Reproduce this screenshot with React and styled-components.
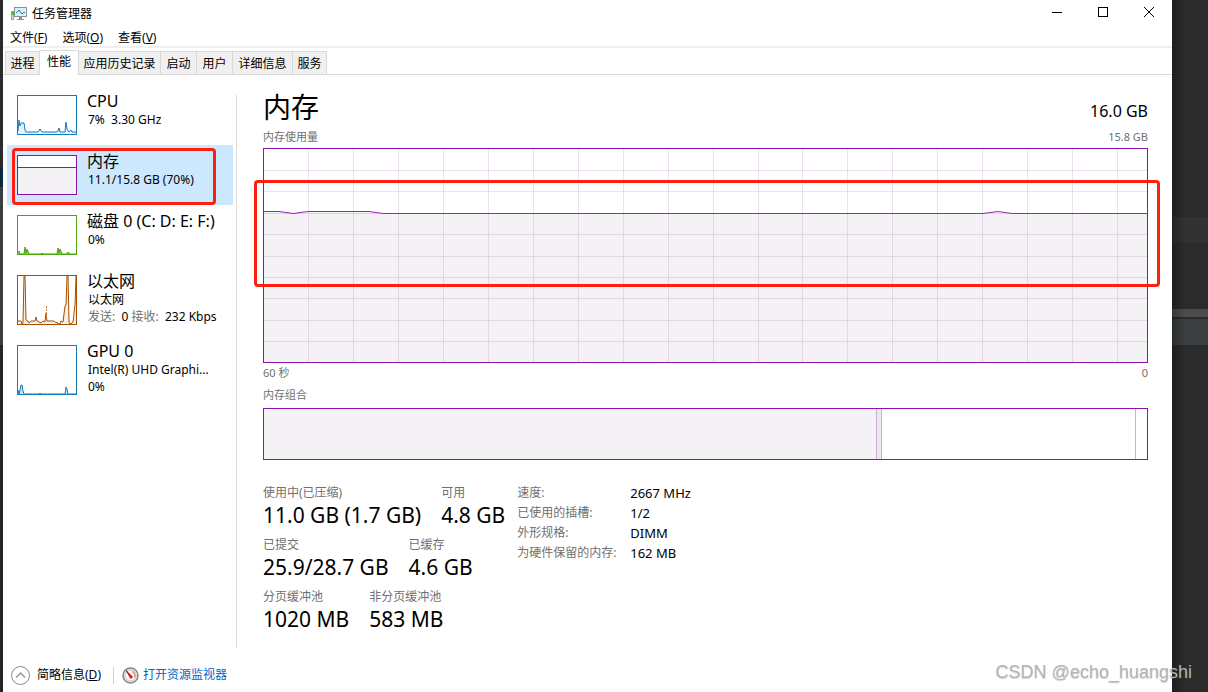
import React from "react";
import styled, { createGlobalStyle } from "styled-components";

const GlobalStyle = createGlobalStyle`
  * { box-sizing: border-box; }
  body {
    margin: 0;
    background: #2b2b2b;
    color: #000;
    font: 12px/18px "Noto Sans", "Noto Sans CJK SC", sans-serif;
  }
  button { font: inherit; color: inherit; background: none; border: 0; padding: 0; }
  h1, h2, dl, dd, dt, p { margin: 0; font-weight: 400; }
`;

const purple = "#8b12ae";

const Desktop = styled.div`
  position: relative;
  display: grid;
  grid-template-columns: 3px minmax(0, 1fr) 36px;
  min-height: 100vh;
`;

const LeftEdge = styled.div`
  background: linear-gradient(#2b2b2b 167px, #0d293e 167px 187px, #3c3f41 187px 345px, #242424 345px);
`;

const RightEdge = styled.div`
  background:
    linear-gradient(90deg, rgba(0, 0, 0, 0.3), transparent 14px),
    linear-gradient(
      #2b2b2b 217px, #323232 217px 242px, #2b2b2b 242px 309px, #4d4d4d 309px 317px,
      #2b2b2b 317px 319px, #3c3f41 319px 345px, #2b2b2b 345px
    );
`;

const Window = styled.div`
  display: flex;
  flex-direction: column;
  background: #fff;
`;

const TitleBar = styled.header`
  display: flex;
  align-items: center;
  height: 27px;
  padding-left: 8px;
  gap: 5px;
`;

const Title = styled.h1`
  flex: 1;
  font-size: 12px;
  line-height: 18px;
`;

const WindowControls = styled.div`
  display: flex;
  align-self: flex-start;
`;

const ControlButton = styled.button`
  display: grid;
  place-items: center;
  width: 46px;
  height: 24px;
`;

const MenuBar = styled.nav`
  display: flex;
  gap: 15px;
  height: 21px;
  padding: 2px 0 0 7px;
  align-items: center;
  border-bottom: 2px solid #f0f0f0;
`;

const Tabs = styled.div`
  display: flex;
  align-items: flex-end;
  height: 27px;
  padding-left: 2px;
  border-bottom: 1px solid #d9d9d9;
`;

const Tab = styled.button`
  width: ${(p) => p.$width}px;
  height: ${(p) => (p.$active ? 25 : 23)}px;
  padding-top: ${(p) => (p.$active ? 0 : 2)}px;
  padding-bottom: ${(p) => (p.$active ? 3 : 0)}px;
  margin-bottom: ${(p) => (p.$active ? -1 : 0)}px;
  background: ${(p) => (p.$active ? "#fff" : "#f0f0f0")};
  border: 1px solid #d9d9d9;
  border-left-width: ${(p) => (p.$active || p.$first ? 1 : 0)}px;
  border-right-width: ${(p) => (p.$beforeActive ? 0 : 1)}px;
  border-bottom: 0;
  white-space: nowrap;
`;

const Body = styled.div`
  display: flex;
  flex: 1;
  padding: 10px 24px 0 4px;
`;

const Sidebar = styled.aside`
  flex: none;
  width: 230px;
  margin: 10px 0;
  padding-right: 3px;
  border-right: 1px solid #dcdcdc;
`;

const DeviceList = styled.div`
  display: flex;
  flex-direction: column;
  margin-top: -10px;
`;

const Device = styled.button`
  position: relative;
  display: flex;
  gap: 10px;
  height: ${(p) => (p.$tall ? 70 : 60)}px;
  padding: 10px 0 0 10px;
  text-align: left;
  background: ${(p) => (p.$selected ? "#cce8ff" : "transparent")};
`;

const Spark = styled.svg`
  flex: none;
  display: block;
  background: #fff;
`;

const DeviceText = styled.span`
  display: flex;
  flex-direction: column;
  min-width: 0;
  margin-top: -4px;
  white-space: pre;
`;

const DeviceName = styled.span`
  font-size: 16px;
  line-height: 20px;
`;

const DeviceLine = styled.span`
  padding-left: 1px;
  line-height: 17px;
`;

const Muted = styled.span`
  color: #707070;
`;

const Highlight = styled.span`
  position: absolute;
  inset: ${(p) => p.$inset};
  border: 3px solid #ff1e12;
  border-radius: 4px;
  pointer-events: none;
`;

const Main = styled.main`
  flex: 1;
  min-width: 0;
  padding: 4px 0 0 26px;
`;

const Heading = styled.div`
  display: flex;
  justify-content: space-between;
  align-items: flex-start;
  height: 38px;
`;

const PanelTitle = styled.h2`
  font-size: 28px;
  line-height: 36px;
`;

const Capacity = styled.span`
  font-size: 16px;
  line-height: 20px;
  padding-top: 12px;
`;

const CaptionRow = styled.div`
  display: flex;
  justify-content: space-between;
  height: ${(p) => p.$height}px;
  color: #707070;
  font-size: 11px;
  line-height: 20px;
`;

const ChartFrame = styled.div`
  position: relative;
  height: 215px;
  border: 1px solid ${purple};
`;

const ChartSvg = styled.svg`
  display: block;
  width: 100%;
  height: 100%;
`;

const Composition = styled.div`
  display: flex;
  height: 52px;
  border: 1px solid ${purple};
`;

const Segment = styled.div`
  flex: ${(p) => p.$share} 0 0;
  background: ${(p) => p.$fill};
  border-right: ${(p) => (p.$last ? "0" : "1px solid #c9b2d6")};
`;

const Details = styled.div`
  display: flex;
  gap: 12px;
  padding-top: 23px;
`;

const Stats = styled.dl`
  display: flex;
  flex-direction: column;
`;

const StatRow = styled.div`
  display: flex;
  gap: 20px;
  height: 52px;
`;

const StatLabel = styled.dt`
  color: #707070;
  line-height: 20px;
`;

const StatValue = styled.dd`
  font-size: 21px;
  line-height: 24px;
  white-space: nowrap;
`;

const Specs = styled.table`
  align-self: flex-start;
  border-collapse: collapse;
  line-height: 20px;
  th {
    width: 113px;
    padding: 0;
    color: #707070;
    font-weight: 400;
    text-align: left;
    white-space: nowrap;
  }
  td {
    padding: 0;
    font-size: 13px;
  }
`;

const Footer = styled.footer`
  display: flex;
  align-items: center;
  height: 34px;
  padding-left: 8px;
`;

const FewerDetails = styled.button`
  display: flex;
  align-items: center;
  gap: 7px;
  padding-right: 12px;
`;

const MonitorLink = styled.a`
  display: flex;
  align-items: center;
  gap: 4px;
  padding-left: 8px;
  border-left: 1px solid #d0d0d0;
  line-height: 16px;
  color: #0066cc;
  text-decoration: none;
`;

const Watermark = styled.div`
  position: absolute;
  right: 16px;
  bottom: 8px;
  color: #b4b4b4;
  font: 18px/24px "Liberation Sans", sans-serif;
  text-shadow: 0 1px 1px rgba(90, 90, 90, 0.25);
`;

function AppIcon() {
  return (
    <svg width="16" height="16" viewBox="0 0 16 16" aria-hidden="true">
      <rect x="0.5" y="5.5" width="2" height="8" fill="#d8dcdf" stroke="#9aa0a4" />
      <path d="M1 7.500h2" stroke="#2fc52f" strokeWidth="3" />
      <rect x="3.500" y="1.500" width="12" height="9" fill="#d9f1fb" stroke="#8b9297" />
      <path d="M5 6.500H6L8 4 11 8 12.500 6.500H14" fill="none" stroke="#2a7ba5" />
      <path d="M8 11h3v2h2v1H6v-1h2z" fill="#8b9297" />
    </svg>
  );
}

function GaugeIcon() {
  return (
    <svg width="17" height="17" viewBox="0 0 17 17" aria-hidden="true">
      <circle cx="8.500" cy="8.500" r="7.500" fill="#f4f4f4" stroke="#858585" strokeWidth="1.500" />
      <circle cx="8.500" cy="8.500" r="5.500" fill="#fff" stroke="#bcbcbc" />
      <path d="M10 4.500a4.500 4.500 0 0 1 2.500 6" fill="none" stroke="#e39b76" strokeWidth="1.500" />
      <path d="M4 3.500 10.500 10 9 11.500Z" fill="#d5141c" stroke="#b80f18" />
    </svg>
  );
}

const devices = [
  {
    name: "CPU", lines: ["7%  3.30 GHz"], color: "#117dbb", fill: "#e6f1f8", height: 40,
    path: "M1 36 2 25 3 31 4 28 7 28 8 35 9 37 21 37 23 34 25 37 39 37 41 36 42 33 43 37 48 37 49 27 50 34 52 37 54 35 55 37 59 37",
  },
  {
    name: "内存", lines: ["11.1/15.8 GB (70%)"], color: purple, fill: "#f4f2f4", height: 40,
    path: "M1 12.500H59", selected: true,
  },
  {
    name: "磁盘 0 (C: D: E: F:)", lines: ["0%"], color: "#4da60c", fill: "#8fc864", height: 40,
    path: "M1 37 2 36 3 39 7 39 8 32 9 38 10 34 12 39 24 39 25 38 26 39 40 39 41 33 42 38 43 34 45 39 50 39 51 37 53 39 59 39",
  },
  {
    name: "以太网", network: true, color: "#a74f01", fill: "#f7ede4", height: 50, tall: true,
    path: "M1 46 4 46 5 49 6 48 7 1 8 1 9 45 11 46 12 48 14 46 18 46 19 42 20 46 24 48 26 46 28 47 29 38 30 46 37 46 39 48 40 47 41 49 43 49 44 46 46 47 48 31 49 30 50 1 51 1 52 47 53 49 55 48 56 47 58 30 59 1",
  },
  {
    name: "GPU 0", lines: ["Intel(R) UHD Graphi...", "0%"], color: "#117dbb", fill: "#c7e0ef", height: 50, tall: true,
    path: "M1 45 2 49 3 45 4 40 5 40 6 46 7 49 22 49 23 48 24 49 48 49 49 42 50 44 51 49 59 49",
  },
];

function DeviceGraph({ color, fill, height, path, network }) {
  return (
    <Spark width="60" height={height} viewBox={`0 0 60 ${height}`} aria-hidden="true">
      <path d={`${path}V${height}H1Z`} fill={fill} />
      <path d={path} fill="none" stroke={color} />
      {network && <path d="M29.500 31V46" stroke="#e8762b" strokeDasharray="2 1" />}
      <rect x="0.5" y="0.5" width="59" height={height - 1} fill="none" stroke={color} />
    </Spark>
  );
}

function MemoryChart() {
  const columns = Array.from({ length: 19 }, (_, i) => 44.5 + i * 44.95);
  const rows = Array.from({ length: 9 }, (_, i) => 21.5 + i * 21.4);
  const trace = "M0 62.500H15L29 64.500 44 62.500H105L119 64.500H719L734 62.500 748 64.500H883";
  return (
    <ChartFrame>
      <ChartSvg viewBox="0 0 883 213" preserveAspectRatio="none" role="img" aria-label="内存使用量">
        <path d={`${trace}V213H0Z`} fill="#f4f2f5" />
        <g stroke="#7d2a96" strokeOpacity="0.14" shapeRendering="crispEdges">
          {columns.map((x) => <line key={x} x1={x} x2={x} y1="0" y2="213" vectorEffect="non-scaling-stroke" />)}
          {rows.map((y) => <line key={y} x1="0" x2="883" y1={y} y2={y} vectorEffect="non-scaling-stroke" />)}
        </g>
        <path d={trace} fill="none" stroke="#9528b4" vectorEffect="non-scaling-stroke" />
      </ChartSvg>
      <Highlight $inset="31px -13px 75px -10px" />
    </ChartFrame>
  );
}

const tabs = [
  ["进程", 34], ["性能", 40], ["应用历史记录", 82], ["启动", 36], ["用户", 36], ["详细信息", 60], ["服务", 34],
];

const stats = [
  [["使用中(已压缩)", "11.0 GB (1.7 GB)"], ["可用", "4.8 GB"]],
  [["已提交", "25.9/28.7 GB"], ["已缓存", "4.6 GB"]],
  [["分页缓冲池", "1020 MB"], ["非分页缓冲池", "583 MB"]],
];

const specs = [
  ["速度:", "2667 MHz"], ["已使用的插槽:", "1/2"], ["外形规格:", "DIMM"], ["为硬件保留的内存:", "162 MB"],
];

export default function App() {
  return (
    <Desktop>
      <GlobalStyle />
      <LeftEdge />
      <Window>
        <TitleBar>
          <AppIcon />
          <Title>任务管理器</Title>
          <WindowControls>
            <ControlButton aria-label="最小化">
              <svg width="10" height="10"><path d="M0 5.500h10" stroke="#000" /></svg>
            </ControlButton>
            <ControlButton aria-label="最大化">
              <svg width="10" height="10"><rect x="0.5" y="0.5" width="9" height="9" fill="none" stroke="#000" /></svg>
            </ControlButton>
            <ControlButton aria-label="关闭">
              <svg width="10" height="10"><path d="M0 0 10 10M10 0 0 10" stroke="#000" /></svg>
            </ControlButton>
          </WindowControls>
        </TitleBar>
        <MenuBar>
          <button>文件(<u>F</u>)</button>
          <button>选项(<u>O</u>)</button>
          <button>查看(<u>V</u>)</button>
        </MenuBar>
        <Tabs role="tablist">
          {tabs.map(([label, width], i) => (
            <Tab key={label} role="tab" aria-selected={i === 1} $width={width} $active={i === 1} $first={i === 0} $beforeActive={i === 0}>
              {label}
            </Tab>
          ))}
        </Tabs>
        <Body>
          <Sidebar>
            <DeviceList>
              {devices.map((d) => (
                <Device key={d.name} $selected={d.selected} $tall={d.tall}>
                  <DeviceGraph {...d} />
                  <DeviceText>
                    <DeviceName>{d.name}</DeviceName>
                    {d.network ? (
                      <>
                        <DeviceLine>以太网</DeviceLine>
                        <DeviceLine><Muted>发送: </Muted> 0 <Muted>接收: </Muted> 232 Kbps</DeviceLine>
                      </>
                    ) : (
                      d.lines.map((line) => <DeviceLine key={line}>{line}</DeviceLine>)
                    )}
                  </DeviceText>
                  {d.selected && <Highlight $inset="3px 17px 0 5px" />}
                </Device>
              ))}
            </DeviceList>
          </Sidebar>
          <Main>
            <Heading>
              <PanelTitle>内存</PanelTitle>
              <Capacity>16.0 GB</Capacity>
            </Heading>
            <CaptionRow $height={21}><span>内存使用量</span><span>15.8 GB</span></CaptionRow>
            <MemoryChart />
            <CaptionRow $height={22}><span>60 秒</span><span>0</span></CaptionRow>
            <CaptionRow $height={23}><span>内存组合</span></CaptionRow>
            <Composition>
              <Segment $share={614} $fill="#f4f2f5" />
              <Segment $share={4} $fill="#efe6f2" />
              <Segment $share={254} $fill="#fff" />
              <Segment $share={11} $fill="#fff" $last />
            </Composition>
            <Details>
              <Stats>
                {stats.map((row, i) => (
                  <StatRow key={i}>
                    {row.map(([label, value]) => (
                      <div key={label}>
                        <StatLabel>{label}</StatLabel>
                        <StatValue>{value}</StatValue>
                      </div>
                    ))}
                  </StatRow>
                ))}
              </Stats>
              <Specs>
                <tbody>
                  {specs.map(([label, value]) => (
                    <tr key={label}><th scope="row">{label}</th><td>{value}</td></tr>
                  ))}
                </tbody>
              </Specs>
            </Details>
          </Main>
        </Body>
        <Footer>
          <FewerDetails>
            <svg width="19" height="19" viewBox="0 0 19 19" aria-hidden="true">
              <circle cx="9.500" cy="9.500" r="9" fill="none" stroke="#8a8a8a" />
              <path d="M5 11.500 9.500 7 14 11.500" fill="none" stroke="#9a9a9a" strokeWidth="1.500" />
            </svg>
            <span>简略信息(<u>D</u>)</span>
          </FewerDetails>
          <MonitorLink href="#resource-monitor"><GaugeIcon />打开资源监视器</MonitorLink>
        </Footer>
      </Window>
      <RightEdge />
      <Watermark>CSDN @echo_huangshi</Watermark>
    </Desktop>
  );
}
